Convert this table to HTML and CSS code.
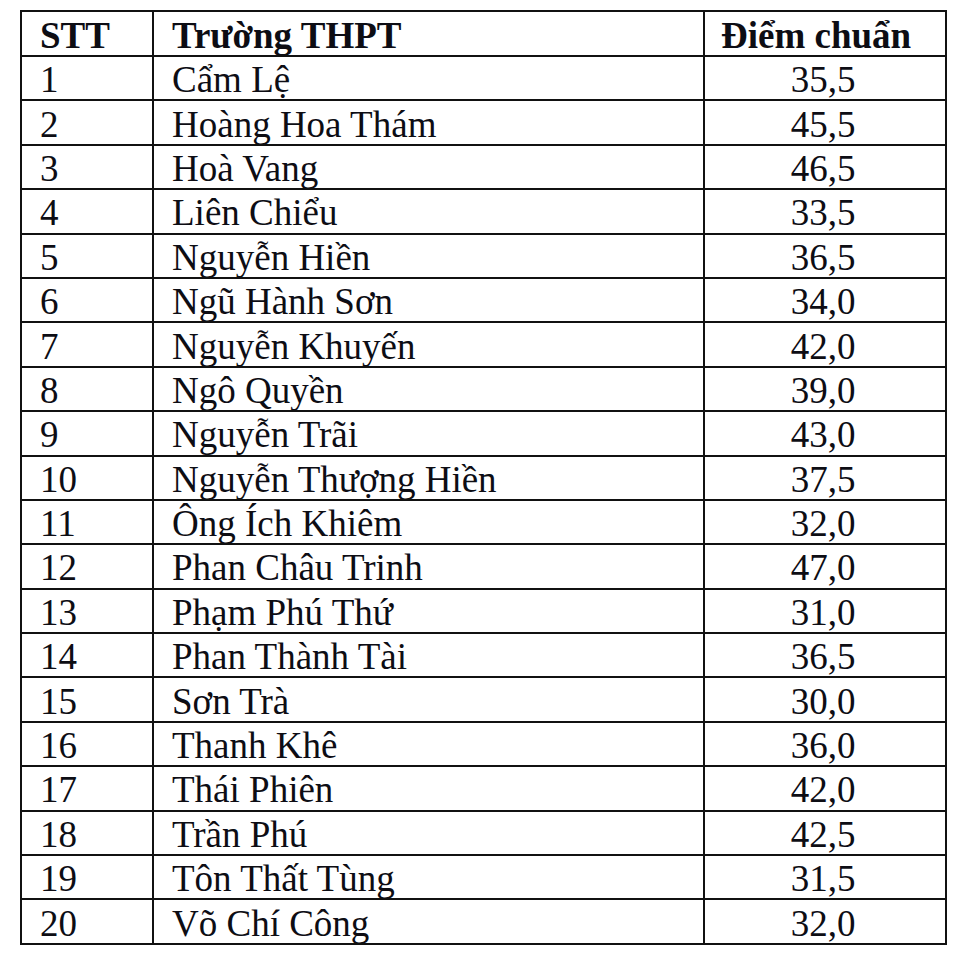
FILE: index.html
```html
<!DOCTYPE html>
<html lang="vi">
<head>
<meta charset="utf-8">
<title>Điểm chuẩn THPT</title>
<link rel="stylesheet" href="styles.css">
</head>
<body>
<table class="scores">
  <colgroup>
    <col class="c-stt">
    <col class="c-name">
    <col class="c-score">
  </colgroup>
  <thead>
    <tr><th class="stt">STT</th><th class="name">Trường THPT</th><th class="score-h">Điểm chuẩn</th></tr>
  </thead>
  <tbody>
    <tr><td class="stt">1</td><td class="name">Cẩm Lệ</td><td class="score">35,5</td></tr>
    <tr><td class="stt">2</td><td class="name">Hoàng Hoa Thám</td><td class="score">45,5</td></tr>
    <tr><td class="stt">3</td><td class="name">Hoà Vang</td><td class="score">46,5</td></tr>
    <tr><td class="stt">4</td><td class="name">Liên Chiểu</td><td class="score">33,5</td></tr>
    <tr><td class="stt">5</td><td class="name">Nguyễn Hiền</td><td class="score">36,5</td></tr>
    <tr><td class="stt">6</td><td class="name">Ngũ Hành Sơn</td><td class="score">34,0</td></tr>
    <tr><td class="stt">7</td><td class="name">Nguyễn Khuyến</td><td class="score">42,0</td></tr>
    <tr><td class="stt">8</td><td class="name">Ngô Quyền</td><td class="score">39,0</td></tr>
    <tr><td class="stt">9</td><td class="name">Nguyễn Trãi</td><td class="score">43,0</td></tr>
    <tr><td class="stt">10</td><td class="name">Nguyễn Thượng Hiền</td><td class="score">37,5</td></tr>
    <tr><td class="stt">11</td><td class="name">Ông Ích Khiêm</td><td class="score">32,0</td></tr>
    <tr><td class="stt">12</td><td class="name">Phan Châu Trinh</td><td class="score">47,0</td></tr>
    <tr><td class="stt">13</td><td class="name">Phạm Phú Thứ</td><td class="score">31,0</td></tr>
    <tr><td class="stt">14</td><td class="name">Phan Thành Tài</td><td class="score">36,5</td></tr>
    <tr><td class="stt">15</td><td class="name">Sơn Trà</td><td class="score">30,0</td></tr>
    <tr><td class="stt">16</td><td class="name">Thanh Khê</td><td class="score">36,0</td></tr>
    <tr><td class="stt">17</td><td class="name">Thái Phiên</td><td class="score">42,0</td></tr>
    <tr><td class="stt">18</td><td class="name">Trần Phú</td><td class="score">42,5</td></tr>
    <tr><td class="stt">19</td><td class="name">Tôn Thất Tùng</td><td class="score">31,5</td></tr>
    <tr><td class="stt">20</td><td class="name">Võ Chí Công</td><td class="score">32,0</td></tr>
  </tbody>
</table>
</body>
</html>
```
FILE: styles.css
```css
html, body {
  margin: 0;
  padding: 0;
  background: #ffffff;
}
body {
  padding: 10px 0 0 20px;
  font-family: "Liberation Serif", "Times New Roman", serif;
  color: #0d0d14;
}
.scores {
  border-collapse: collapse;
  table-layout: fixed;
  width: 925px;
  font-size: 37px;
  line-height: 38px;
}
.c-stt { width: 132px; }
.c-name { width: 551px; }
.c-score { width: 242px; }
.scores th,
.scores td {
  border: 2px solid #111;
  padding: 4px 0 0 0;
  height: 38.4px;
  white-space: nowrap;
  overflow: hidden;
  vertical-align: middle;
}
.scores thead th {
  height: 39px;
  font-weight: bold;
  text-align: left;
}
.scores .stt { padding-left: 18px; text-align: left; }
.scores .name { padding-left: 18px; text-align: left; }
.scores .score-h { padding-left: 16px; }
.scores .score { text-align: center; padding-right: 4px; }
```
